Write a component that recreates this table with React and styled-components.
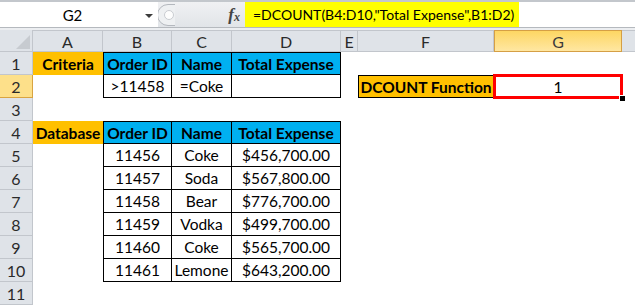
import styled, { createGlobalStyle } from "styled-components";

const ORANGE = "#ffc000";
const BLUE = "#00b0f0";

const GlobalStyle = createGlobalStyle`
  body {
    margin: 0;
    background: #fff;
    font-family: Lato, "Open Sans", sans-serif;
  }
`;

const COLS = [
  { key: "A", w: 70 },
  { key: "B", w: 69 },
  { key: "C", w: 60 },
  { key: "D", w: 109 },
  { key: "E", w: 17 },
  { key: "F", w: 136 },
  { key: "G", w: 128 },
  { key: "H", w: 40, hidden: true },
];
const ROWS = [1, 2, 3, 4, 5, 6, 7, 8, 9, 10, 11];
const ACTIVE_COL = "G";
const ACTIVE_ROW = 2;

// line: undefined = no border, otherwise right+bottom, plus "t"/"l" edges
const cells = {
  A1: { text: "Criteria", fill: ORANGE, bold: true },
  B1: { text: "Order ID", fill: BLUE, bold: true, line: "tl" },
  C1: { text: "Name", fill: BLUE, bold: true, line: "t" },
  D1: { text: "Total Expense", fill: BLUE, bold: true, line: "t" },
  B2: { text: ">11458", line: "l" },
  C2: { text: "=Coke", line: "" },
  D2: { text: "", line: "" },
  F2: { text: "DCOUNT Function", fill: ORANGE, bold: true, line: "tl" },
  G2: { text: "1", active: true },
  A4: { text: "Database", fill: ORANGE, bold: true },
  B4: { text: "Order ID", fill: BLUE, bold: true, line: "tl" },
  C4: { text: "Name", fill: BLUE, bold: true, line: "t" },
  D4: { text: "Total Expense", fill: BLUE, bold: true, line: "t" },
};

const orders = [
  ["11456", "Coke", "$456,700.00"],
  ["11457", "Soda", "$567,800.00"],
  ["11458", "Bear", "$776,700.00"],
  ["11459", "Vodka", "$499,700.00"],
  ["11460", "Coke", "$565,700.00"],
  ["11461", "Lemone", "$643,200.00"],
];
orders.forEach((o, i) => {
  const r = i + 5;
  cells["B" + r] = { text: o[0], line: "l" };
  cells["C" + r] = { text: o[1], line: "" };
  cells["D" + r] = { text: o[2], line: "" };
});

const App = () => {
  return (
    <Sheet>
      <GlobalStyle />
      <FormulaBar>
        <NameBox>
          <NameText>G2</NameText>
          <DropArrow />
        </NameBox>
        <Divider>
          <Grip>
            <svg width="18" height="24" viewBox="0 0 18 24">
              <path d="M17 1.5 H10 A9.5 9.5 0 0 0 10 22.5 H17" fill="#eef0f2" stroke="#b4b8be" />
              <circle cx="11" cy="12" r="4.5" fill="#fdfdfd" stroke="#c9ccd1" />
            </svg>
          </Grip>
          <Fx>
            <i>f</i>
            <sub>x</sub>
          </Fx>
        </Divider>
        <FormulaInput>
          <Highlight>=DCOUNT(B4:D10,"Total Expense",B1:D2)</Highlight>
        </FormulaInput>
      </FormulaBar>
      <Spacer />
      <Grid>
        <Corner>
          <svg width="14" height="14" viewBox="0 0 14 14">
            <polygon points="14,0 14,14 0,14" fill="#c7cbd0" />
          </svg>
        </Corner>
        {COLS.map((c) => (
          <ColHead key={c.key} $active={c.key === ACTIVE_COL}>
            {c.hidden ? "" : c.key}
          </ColHead>
        ))}
        {ROWS.map((r) => [
          <RowHead key={"h" + r} $active={r === ACTIVE_ROW}>
            {r}
          </RowHead>,
          ...COLS.map((c) => {
            const cell = cells[c.key + r] || {};
            const lined = cell.line !== undefined;
            return (
              <Cell
                key={c.key + r}
                $fill={cell.fill}
                $bold={cell.bold}
                $lined={lined}
                $top={lined && cell.line.includes("t")}
                $left={lined && cell.line.includes("l")}
                $active={cell.active}
              >
                {cell.text}
              </Cell>
            );
          }),
        ])}
      </Grid>
    </Sheet>
  );
};

const Sheet = styled.div`
  width: 635px;
  height: 306px;
  overflow: hidden;
  background: #fff;
  color: #000;
`;

const FormulaBar = styled.div`
  display: flex;
  height: 28px;
  box-sizing: border-box;
  border-top: 2px solid #c3c7cc;
  border-bottom: 1px solid #b5b9be;
  background: #fff;
`;

const NameBox = styled.div`
  width: 158px;
  display: flex;
  align-items: center;
  background: #fff;
`;

const NameText = styled.span`
  width: 145px;
  text-align: center;
  font-size: 15px;
`;

const DropArrow = styled.span`
  width: 0;
  height: 0;
  margin-top: 2px;
  border-left: 4px solid transparent;
  border-right: 4px solid transparent;
  border-top: 4px solid #3c3c3c;
`;

const Divider = styled.div`
  width: 87px;
  display: flex;
  align-items: center;
  justify-content: space-between;
  background: linear-gradient(#f0f1f3, #e1e4e8);
  padding-right: 5px;
  box-sizing: border-box;
`;

const Grip = styled.div`
  display: flex;
  align-items: center;
  height: 100%;
`;

const Fx = styled.span`
  font-family: "Liberation Serif", "DejaVu Serif", serif;
  font-size: 17px;
  font-weight: bold;
  color: #444;
  i {
    font-style: italic;
  }
  sub {
    font-size: 12px;
    font-style: italic;
    vertical-align: -1px;
  }
`;

const FormulaInput = styled.div`
  flex: 1;
  display: flex;
  background: #fff;
`;

const Highlight = styled.span`
  display: flex;
  align-items: center;
  background: #ffff00;
  padding: 0 5px 0 8px;
  font-size: 14px;
  white-space: nowrap;
`;

const Spacer = styled.div`
  height: 2px;
  background: #eceef1;
`;

const Grid = styled.div`
  display: grid;
  grid-template-columns: 33px ${COLS.map((c) => c.w + "px").join(" ")};
  grid-template-rows: 22px repeat(${ROWS.length}, 23px);
`;

const Head = styled.div`
  box-sizing: border-box;
  display: flex;
  align-items: center;
  justify-content: center;
  font-size: 16px;
  color: #2a2a2a;
  background: #dfe3e8;
  border-right: 1px solid #c2c6cc;
  border-bottom: 1px solid #c2c6cc;
`;

const Corner = styled(Head)`
  align-items: flex-end;
  justify-content: flex-end;
  padding: 0 2px 2px 0;
`;

const ColHead = styled(Head)`
  border-top: 1px solid #c2c6cc;
  ${(p) =>
    p.$active &&
    `
    background: linear-gradient(#fdd663, #ffe7a2);
    border: 1px solid #d59f45;
    color: #3a3a3a;
  `}
`;

const RowHead = styled(Head)`
  ${(p) =>
    p.$active &&
    `
    background: #fde08a;
    border-right-color: #d9a441;
    border-bottom-color: #d9a441;
  `}
`;

const Cell = styled.div`
  position: relative;
  box-sizing: border-box;
  display: flex;
  align-items: center;
  justify-content: center;
  white-space: nowrap;
  background: ${(p) => p.$fill || "#fff"};
  font-size: ${(p) => (p.$bold ? "15.5px" : "15.5px")};
  font-weight: ${(p) => (p.$bold ? 700 : 400)};
  border-right: ${(p) => (p.$lined ? "1px solid #000" : "none")};
  border-bottom: ${(p) => (p.$lined ? "1px solid #000" : "none")};
  border-top: ${(p) => (p.$top ? "1px solid #000" : "none")};
  border-left: ${(p) => (p.$left ? "1px solid #000" : "none")};
  ${(p) =>
    p.$active &&
    `
    &::before {
      content: "";
      position: absolute;
      inset: -1px;
      border: 3px solid #ff0000;
      z-index: 1;
    }
    &::after {
      content: "";
      position: absolute;
      right: -3px;
      bottom: -3px;
      width: 5px;
      height: 5px;
      background: #000;
      border: 1px solid #fff;
      border-width: 1px 0 0 1px;
      z-index: 2;
    }
  `}
`;

export default App;
